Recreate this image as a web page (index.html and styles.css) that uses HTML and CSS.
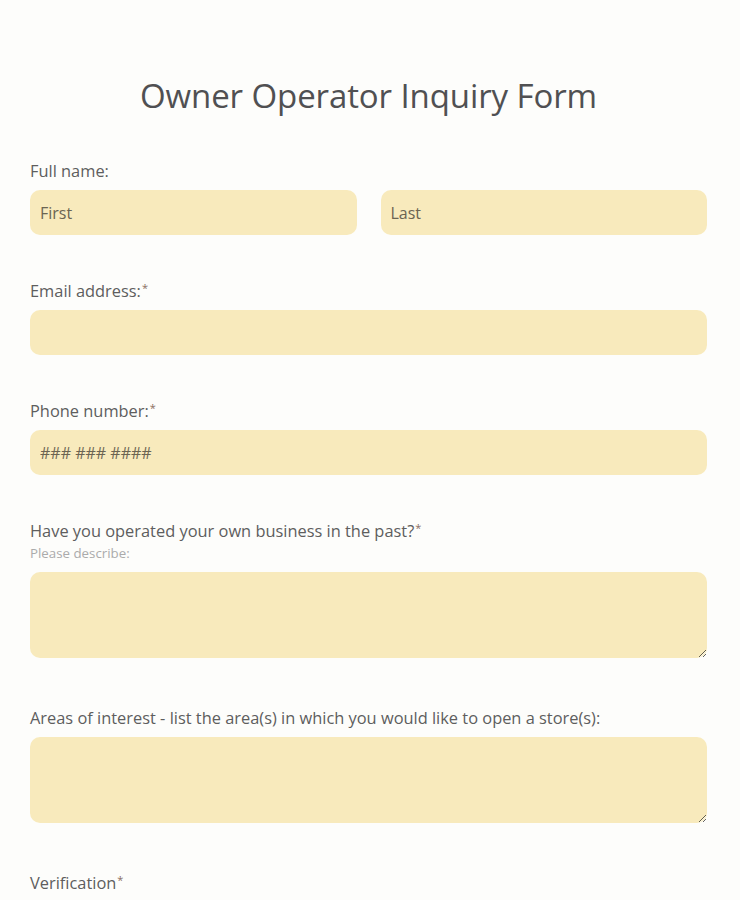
FILE: index.html
```html
<!DOCTYPE html>
<html>
<head>
<meta charset="utf-8">
<link rel="stylesheet" href="styles.css">
</head>
<body>
<form class="form">
  <h1 class="title">Owner Operator Inquiry Form</h1>

  <div class="field field-name">
    <label class="label">Full name:</label>
    <div class="name-row">
      <input class="input" type="text" placeholder="First">
      <input class="input" type="text" placeholder="Last">
    </div>
  </div>

  <div class="field">
    <label class="label">Email address:<span class="req">*</span></label>
    <input class="input" type="text">
  </div>

  <div class="field">
    <label class="label">Phone number:<span class="req">*</span></label>
    <input class="input" type="text" placeholder="### ### ####">
  </div>

  <div class="field field-area">
    <label class="label">Have you operated your own business in the past?<span class="req">*</span></label>
    <div class="hint">Please describe:</div>
    <textarea class="textarea"></textarea>
  </div>

  <div class="field field-area">
    <label class="label">Areas of interest - list the area(s) in which you would like to open a store(s):</label>
    <textarea class="textarea"></textarea>
  </div>

  <div class="field field-last">
    <label class="label">Verification<span class="req">*</span></label>
  </div>
</form>
</body>
</html>
```

FILE: styles.css
```css
html, body {
  margin: 0;
  padding: 0;
  background: #fdfdfb;
}

body {
  font-family: "Open Sans", "Liberation Sans", sans-serif;
  color: #5a5a5a;
}

.form {
  width: 677px;
  margin: 0 0 0 30px;
  padding-top: 73px;
  display: flex;
  flex-direction: column;
}

.title {
  margin: 0 0 42px 0;
  font-size: 33px;
  line-height: 46px;
  font-weight: 400;
  color: #505052;
  text-align: center;
  letter-spacing: -0.1px;
}

.field {
  display: flex;
  flex-direction: column;
  margin-bottom: 46px;
}

.field-area {
  margin-bottom: 50px;
}

.field-last {
  margin-bottom: 0;
}

.label {
  font-size: 16.4px;
  line-height: 20px;
  color: #5e5e5e;
  margin-bottom: 9px;
}

.req {
  color: #8a6e62;
  font-size: 11px;
  vertical-align: top;
  line-height: 14px;
  margin-left: 1px;
}

.hint {
  font-size: 13.3px;
  line-height: 16px;
  color: #ababab;
  margin-top: -5px;
  margin-bottom: 11px;
}

.name-row {
  display: flex;
  gap: 24px;
}

.name-row .input {
  flex: 1;
  min-width: 0;
}

.input, .textarea {
  box-sizing: border-box;
  border: none;
  outline: none;
  background: #f8eabc;
  border-radius: 10px;
  font-family: inherit;
  font-size: 16px;
  color: #555;
  padding: 0 10px;
  width: 100%;
}

.input {
  height: 45px;
}

.input::placeholder {
  color: #6b6452;
}

.textarea {
  height: 86px;
  padding: 10px;
  resize: vertical;
  display: block;
}
```
